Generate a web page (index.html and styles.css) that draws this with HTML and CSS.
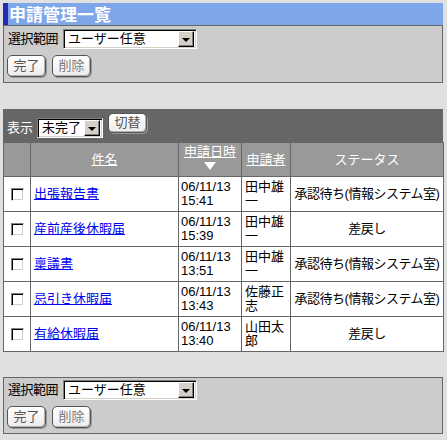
FILE: index.html
```html
<!DOCTYPE html>
<html lang="ja">
<head>
<meta charset="utf-8">
<title>申請管理一覧</title>
<link rel="stylesheet" href="styles.css">
</head>
<body>
<div class="page">
  <div class="title">申請管理一覧</div>
  <div class="panel">
    <div class="sel-row">
      <span class="label">選択範囲</span>
      <span class="select wide"><span class="sel-text">ユーザー任意</span><span class="sel-btn"><span class="arrow"></span></span></span>
    </div>
    <div class="btn-row">
      <span class="btn">完了</span>
      <span class="btn dim">削除</span>
    </div>
  </div>

  <div class="list">
    <div class="bar">
      <span class="bar-label">表示</span>
      <span class="select narrow"><span class="sel-text">未完了</span><span class="sel-btn"><span class="arrow"></span></span></span>
      <span class="btn small">切替</span>
    </div>
    <table class="grid">
      <thead>
        <tr>
          <th class="c-check"></th>
          <th class="c-name"><a href="#">件名</a></th>
          <th class="c-date"><a href="#">申請日時</a><br><a href="#" class="sort"><span class="tri"></span></a></th>
          <th class="c-user"><a href="#">申請者</a></th>
          <th class="c-status">ステータス</th>
        </tr>
      </thead>
      <tbody>
        <tr>
          <td class="c-check"><span class="chk"></span></td>
          <td><a href="#">出張報告書</a></td>
          <td class="date">06/11/13<br>15:41</td>
          <td class="user">田中雄一</td>
          <td class="status">承認待ち(情報システム室)</td>
        </tr>
        <tr>
          <td class="c-check"><span class="chk"></span></td>
          <td><a href="#">産前産後休暇届</a></td>
          <td class="date">06/11/13<br>15:39</td>
          <td class="user">田中雄一</td>
          <td class="status">差戻し</td>
        </tr>
        <tr>
          <td class="c-check"><span class="chk"></span></td>
          <td><a href="#">稟議書</a></td>
          <td class="date">06/11/13<br>13:51</td>
          <td class="user">田中雄一</td>
          <td class="status">承認待ち(情報システム室)</td>
        </tr>
        <tr>
          <td class="c-check"><span class="chk"></span></td>
          <td><a href="#">忌引き休暇届</a></td>
          <td class="date">06/11/13<br>13:43</td>
          <td class="user">佐藤正志</td>
          <td class="status">承認待ち(情報システム室)</td>
        </tr>
        <tr>
          <td class="c-check"><span class="chk"></span></td>
          <td><a href="#">有給休暇届</a></td>
          <td class="date">06/11/13<br>13:40</td>
          <td class="user">山田太郎</td>
          <td class="status">差戻し</td>
        </tr>
      </tbody>
    </table>
  </div>

  <div class="panel bottom">
    <div class="sel-row">
      <span class="label">選択範囲</span>
      <span class="select wide"><span class="sel-text">ユーザー任意</span><span class="sel-btn"><span class="arrow"></span></span></span>
    </div>
    <div class="btn-row">
      <span class="btn">完了</span>
      <span class="btn dim">削除</span>
    </div>
  </div>
</div>
</body>
</html>
```

FILE: styles.css
```css
html, body {
  margin: 0;
  padding: 0;
  background: #e0e0e0;
}
body {
  font-family: "Liberation Sans", "Noto Sans CJK JP", sans-serif;
  font-size: 13px;
  color: #000;
}
.page {
  width: 440px;
  margin: 3px 0 0 3px;
}
.title {
  height: 22px;
  line-height: 22px;
  background: #7ea6ea;
  border-left: 5px solid #2a2ab4;
  padding-left: 1px;
  color: #fff;
  font-weight: bold;
  font-size: 17px;
  font-family: "Noto Sans CJK JP", sans-serif;
}
.panel {
  background: #cccccc;
  border: 1px solid #666;
  padding: 3px 3px 5px 3px;
  display: flex;
  flex-direction: column;
  gap: 6px;
}
.panel.bottom {
  margin-top: 25px;
  padding-top: 2px;
}
.sel-row {
  display: flex;
  align-items: center;
  gap: 5px;
  padding-left: 1px;
}
.label {
  line-height: 14px;
  letter-spacing: -0.5px;
}
.select {
  display: flex;
  align-items: center;
  height: 20px;
  box-sizing: border-box;
  background: #fff;
  border: 1px solid;
  border-color: #808080 #fff #fff #808080;
  box-shadow: inset 1px 1px 0 #000, inset -1px -1px 0 #d4d0c8;
  padding: 0 2px 0 4px;
}
.select.wide { width: 134px; }
.select.narrow { width: 66px; }
.sel-text {
  flex: 1;
  line-height: 14px;
  white-space: nowrap;
}
.sel-btn {
  width: 16px;
  height: 16px;
  box-sizing: border-box;
  background: #d4d0c8;
  border: 1px solid;
  border-color: #fff #000 #000 #fff;
  box-shadow: inset -1px -1px 0 #808080;
  display: flex;
  align-items: center;
  justify-content: center;
}
.arrow {
  width: 0;
  height: 0;
  border-left: 4px solid transparent;
  border-right: 4px solid transparent;
  border-top: 4px solid #000;
  margin-top: 1px;
}
.btn-row {
  display: flex;
  gap: 6px;
}
.btn {
  width: 39px;
  height: 22px;
  box-sizing: border-box;
  border: 1px solid #555;
  border-radius: 5px;
  background: linear-gradient(#ffffff, #ececec);
  box-shadow: inset -1px -1px 0 #b0b0b0, 1px 1px 0 #999;
  color: #555;
  display: flex;
  align-items: center;
  justify-content: center;
  line-height: 14px;
}
.btn.dim { color: #7a7a7a; }
.btn.small { height: 20px; }

.list {
  margin-top: 26px;
}
.bar {
  background: #666666;
  height: 33px;
  box-sizing: border-box;
  padding: 4px 4px 0 4px;
  display: flex;
  align-items: flex-start;
}
.bar-label {
  color: #fff;
  margin-top: 8px;
  line-height: 14px;
  margin-right: 4px;
}
.bar .select {
  margin-top: 5px;
  margin-right: 5px;
}

.grid {
  width: 440px;
  table-layout: fixed;
  border-collapse: separate;
  border-spacing: 0;
  border-top: 1px solid #666;
  border-left: 1px solid #666;
  background: #fff;
}
.grid th, .grid td {
  box-sizing: border-box;
  border-right: 1px solid #666;
  border-bottom: 1px solid #666;
  padding: 0 3px;
  line-height: 14px;
  vertical-align: middle;
}
.grid th {
  background: #999999;
  color: #fff;
  font-weight: normal;
  height: 34px;
  text-align: center;
}
.grid th a {
  color: #fff;
}
.grid td {
  height: 35px;
}
.c-check { width: 27px; }
.c-name { width: 148px; }
.c-date { width: 63px; }
.c-user { width: 49px; }
.c-status { width: 153px; }
.grid td.c-check {
  text-align: center;
  padding: 0;
}
.grid a {
  color: #0000ee;
  text-decoration: underline;
}
.grid th .sort {
  display: inline-block;
  line-height: 10px;
  padding-top: 3px;
}
.tri {
  display: inline-block;
  width: 0;
  height: 0;
  border-left: 6px solid transparent;
  border-right: 6px solid transparent;
  border-top: 8px solid #fff;
  vertical-align: top;
}
.grid th.c-date {
  padding: 0;
}
.chk {
  display: inline-block;
  width: 13px;
  height: 13px;
  box-sizing: border-box;
  background: #fff;
  border: 1px solid;
  border-color: #808080 #fff #fff #808080;
  box-shadow: inset 1px 1px 0 #000, inset -1px -1px 0 #d4d0c8;
  vertical-align: middle;
}
.grid td.date {
  padding: 0 2px;
}
.grid td.status {
  text-align: center;
  padding: 0 1px;
  white-space: nowrap;
  letter-spacing: -0.5px;
}
```
